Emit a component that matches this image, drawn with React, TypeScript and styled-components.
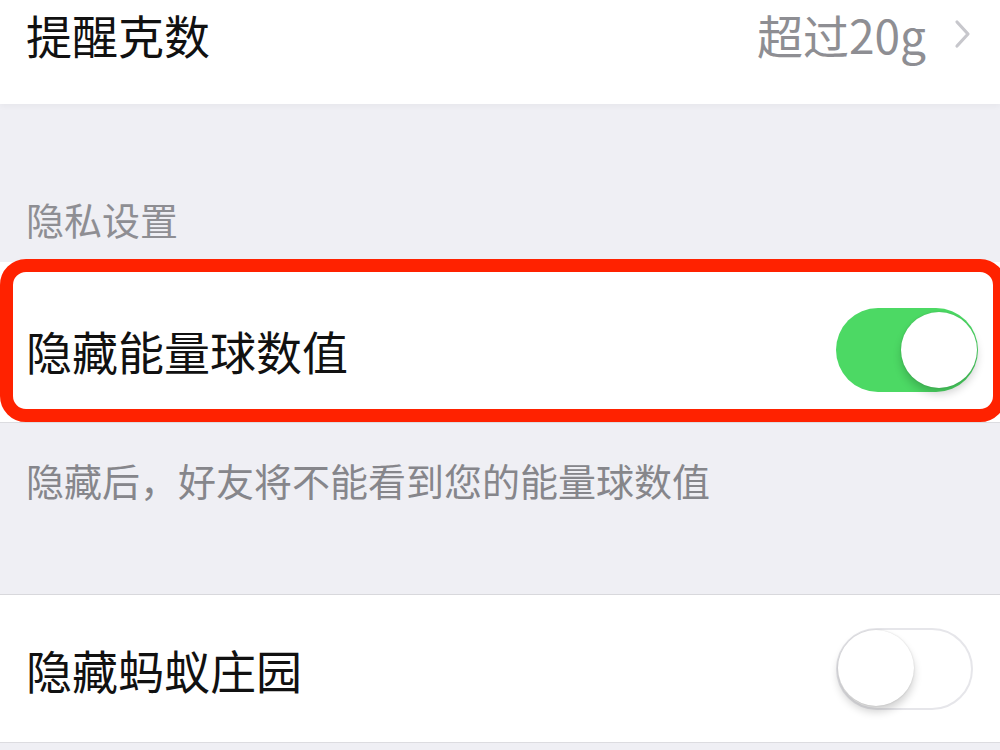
import React from "react";
import styled, { createGlobalStyle } from "styled-components";

const GlobalStyle = createGlobalStyle`
  html, body {
    margin: 0;
    padding: 0;
    background: #efeff4;
    font-family: "Noto Sans CJK SC", "Noto Sans", sans-serif;
  }
`;

const Page = styled.div`
  width: 1000px;
  height: 750px;
  overflow: hidden;
  background: #efeff4;
  display: flex;
  flex-direction: column;
`;

const Row = styled.div<{ $height: number; $padTop?: number; $padRight?: number }>`
  position: relative;
  height: ${(p) => p.$height}px;
  box-sizing: border-box;
  padding: ${(p) => p.$padTop ?? 0}px ${(p) => p.$padRight ?? 22}px 0 26px;
  background: #fff;
  display: flex;
  align-items: center;
  justify-content: space-between;
  border-bottom: 1px solid #dcdce0;
`;

const TopRow = styled(Row)`
  align-items: flex-start;
  border-bottom: none;
  box-shadow: 0 2px 6px rgba(0, 0, 0, 0.04);
`;

const Label = styled.span`
  font-size: 46px;
  line-height: 68px;
  color: #111;
`;

const Value = styled.div`
  display: flex;
  align-items: center;
  gap: 28px;
  font-size: 46px;
  line-height: 68px;
  color: #8e8e93;
`;

const SectionHeader = styled.div`
  height: 158px;
  box-sizing: border-box;
  padding: 91px 26px 0;
  font-size: 38px;
  line-height: 48px;
  color: #8e8e93;
`;

const SectionFooter = styled.div`
  height: 172px;
  box-sizing: border-box;
  padding: 33px 26px 0;
  font-size: 38px;
  line-height: 48px;
  color: #86868b;
  border-bottom: 1px solid #d8d8dc;
`;

const Highlight = styled.div`
  position: absolute;
  top: -3px;
  left: 0;
  right: -6px;
  bottom: 0;
  border: 13px solid #ff2200;
  border-radius: 26px;
  pointer-events: none;
`;

const Track = styled.div<{ $on: boolean }>`
  position: relative;
  width: ${(p) => (p.$on ? 142 : 137)}px;
  height: ${(p) => (p.$on ? 84 : 82)}px;
  box-sizing: border-box;
  border-radius: 42px;
  background: ${(p) => (p.$on ? "#4cd964" : "#fff")};
  border: ${(p) => (p.$on ? "none" : "2px solid #e6e6ea")};
  flex-shrink: 0;
`;

const Knob = styled.div<{ $on: boolean }>`
  position: absolute;
  top: ${(p) => (p.$on ? 4 : 0)}px;
  ${(p) => (p.$on ? "right: 1px;" : "left: 0;")}
  width: 76px;
  height: 76px;
  border-radius: 50%;
  background: #fff;
  box-shadow: 0 6px 8px rgba(0, 0, 0, 0.18), 0 0 2px rgba(0, 0, 0, 0.15);
`;

const Switch = ({ on }: { on: boolean }) => (
  <Track $on={on}>
    <Knob $on={on} />
  </Track>
);

const Chevron = () => (
  <svg width="18" height="30" viewBox="0 0 18 30">
    <path
      d="M3 3 L14 15 L3 27"
      fill="none"
      stroke="#c7c7cc"
      strokeWidth="3.2"
      strokeLinecap="round"
      strokeLinejoin="round"
    />
  </svg>
);

const App = () => {
  return (
    <Page>
      <GlobalStyle />
      <TopRow $height={104} $padTop={0} $padRight={28}>
        <Label>提醒克数</Label>
        <Value>
          超过20g
          <Chevron />
        </Value>
      </TopRow>
      <SectionHeader>隐私设置</SectionHeader>
      <Row $height={161} $padTop={16}>
        <Label>隐藏能量球数值</Label>
        <Switch on />
        <Highlight />
      </Row>
      <SectionFooter>隐藏后，好友将不能看到您的能量球数值</SectionFooter>
      <Row $height={148} $padRight={27}>
        <Label>隐藏蚂蚁庄园</Label>
        <Switch on={false} />
      </Row>
    </Page>
  );
};

export default App;
